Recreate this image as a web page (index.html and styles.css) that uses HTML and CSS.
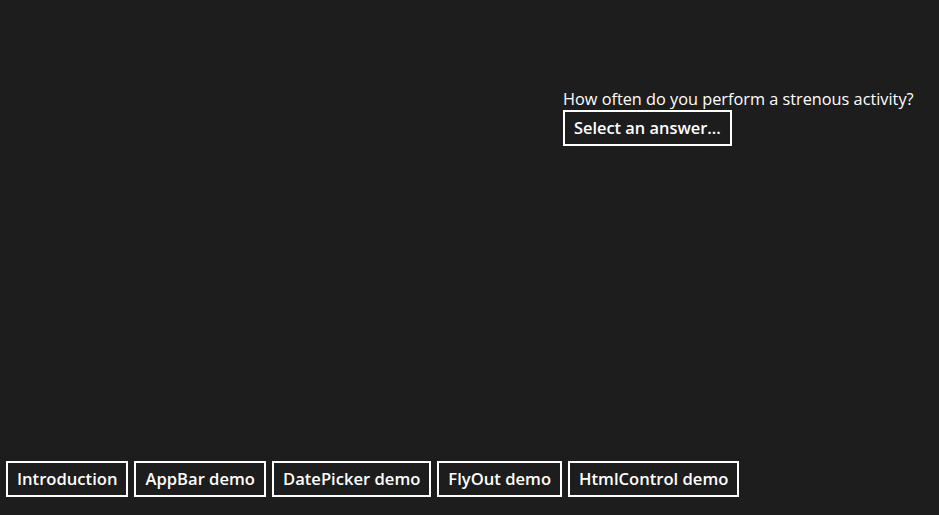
FILE: index.html
```html
<!DOCTYPE html>
<html>
<head>
<meta charset="utf-8">
<link rel="stylesheet" href="styles.css">
</head>
<body>
<div class="page">
  <main class="content">
    <div class="question">
      <label class="question-label">How often do you perform a strenous activity?</label>
      <button class="btn">Select an answer...</button>
    </div>
  </main>
  <nav class="nav">
    <button class="btn">Introduction</button>
    <button class="btn">AppBar demo</button>
    <button class="btn">DatePicker demo</button>
    <button class="btn">FlyOut demo</button>
    <button class="btn">HtmlControl demo</button>
  </nav>
</div>
</body>
</html>
```
FILE: styles.css
```css
html, body {
  margin: 0;
  padding: 0;
  background: #1d1d1d;
}
body {
  font-family: "Open Sans", "Noto Sans", sans-serif;
  color: #ffffff;
}
.page {
  width: 939px;
  height: 515px;
  display: flex;
  flex-direction: column;
}
.content {
  flex: 1;
  padding: 88px 0 0 563px;
}
.question {
  display: flex;
  flex-direction: column;
  align-items: flex-start;
}
.question-label {
  font-size: 16.3px;
  line-height: 22px;
  font-weight: 400;
}
.btn {
  font-family: inherit;
  background: #1d1d1d;
  color: #ffffff;
  border: 2px solid #ffffff;
  font-size: 16.6px;
  font-weight: 600;
  line-height: 20px;
  height: 36px;
  padding: 0 9px;
  margin: 0;
}
.question .btn {
  font-size: 16.4px;
}
.nav {
  display: flex;
  gap: 6px;
  padding: 0 0 18px 6px;
}
```
